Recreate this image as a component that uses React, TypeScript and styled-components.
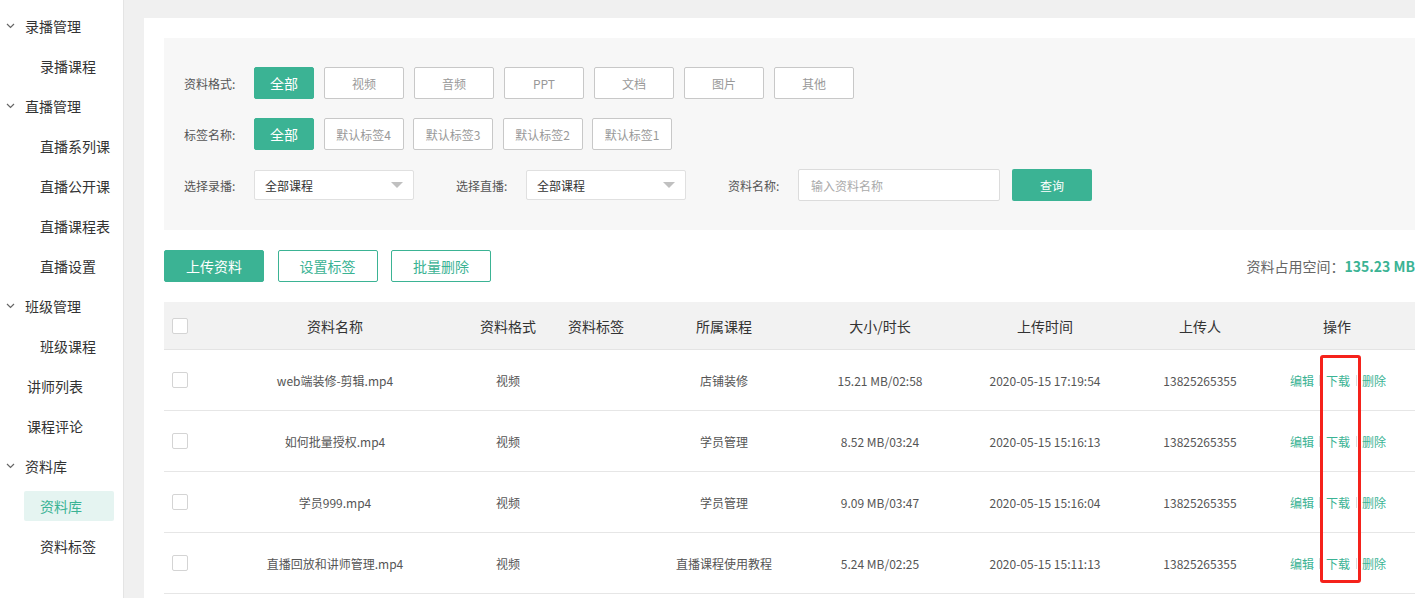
import styled, { createGlobalStyle } from 'styled-components';

const GREEN = '#3bb394';

const GlobalStyle = createGlobalStyle`
  html, body {
    margin: 0;
    padding: 0;
    background: #f0f0f0;
    overflow: hidden;
  }
  body {
    font-family: 'Noto Sans CJK SC', 'Noto Sans', sans-serif;
    font-size: 12px;
    color: #333;
  }
  * {
    box-sizing: border-box;
  }
`;

const menu = [
  { type: 'group', label: '录播管理' },
  { type: 'sub', label: '录播课程' },
  { type: 'group', label: '直播管理' },
  { type: 'sub', label: '直播系列课' },
  { type: 'sub', label: '直播公开课' },
  { type: 'sub', label: '直播课程表' },
  { type: 'sub', label: '直播设置' },
  { type: 'group', label: '班级管理' },
  { type: 'sub', label: '班级课程' },
  { type: 'single', label: '讲师列表' },
  { type: 'single', label: '课程评论' },
  { type: 'group', label: '资料库' },
  { type: 'sub', label: '资料库', active: true },
  { type: 'sub', label: '资料标签' },
];

const formats = ['视频', '音频', 'PPT', '文档', '图片', '其他'];
const tags = ['默认标签4', '默认标签3', '默认标签2', '默认标签1'];

const columns = ['资料名称', '资料格式', '资料标签', '所属课程', '大小/时长', '上传时间', '上传人', '操作'];

const rows = [
  { name: 'web端装修-剪辑.mp4', course: '店铺装修', size: '15.21 MB/02:58', time: '2020-05-15 17:19:54' },
  { name: '如何批量授权.mp4', course: '学员管理', size: '8.52 MB/03:24', time: '2020-05-15 15:16:13' },
  { name: '学员999.mp4', course: '学员管理', size: '9.09 MB/03:47', time: '2020-05-15 15:16:04' },
  { name: '直播回放和讲师管理.mp4', course: '直播课程使用教程', size: '5.24 MB/02:25', time: '2020-05-15 15:11:13' },
];

function Chevron() {
  return (
    <svg width="9" height="6" viewBox="0 0 9 6">
      <path d="M1 1 L4.5 4.5 L8 1" fill="none" stroke="#666" strokeWidth="1.2" />
    </svg>
  );
}

function Caret() {
  return (
    <svg width="12" height="7" viewBox="0 0 12 7">
      <path d="M0 0 L12 0 L6 6 Z" fill="#c0c0c0" />
    </svg>
  );
}

export default function App() {
  return (
    <S.Page>
      <GlobalStyle />
      <S.Sidebar>
        {menu.map((item, i) => (
          <S.MenuItem key={i} $type={item.type}>
            {item.type === 'group' && (
              <S.ChevronBox>
                <Chevron />
              </S.ChevronBox>
            )}
            <S.MenuLabel $type={item.type} $active={!!item.active}>
              {item.label}
            </S.MenuLabel>
          </S.MenuItem>
        ))}
      </S.Sidebar>

      <S.Content>
        <S.Card>
          <S.Filter>
            <S.FilterRow>
              <S.FilterLabel>资料格式:</S.FilterLabel>
              <S.Chips $gap={10}>
                <S.Chip $active>全部</S.Chip>
                {formats.map((f) => (
                  <S.Chip key={f}>{f}</S.Chip>
                ))}
              </S.Chips>
            </S.FilterRow>
            <S.FilterRow>
              <S.FilterLabel>标签名称:</S.FilterLabel>
              <S.Chips $gap={9.5}>
                <S.Chip $active>全部</S.Chip>
                {tags.map((t) => (
                  <S.Chip key={t}>{t}</S.Chip>
                ))}
              </S.Chips>
            </S.FilterRow>
            <S.FilterRow>
              <S.FilterLabel>选择录播:</S.FilterLabel>
              <S.Select>
                <span>全部课程</span>
                <Caret />
              </S.Select>
              <S.FilterLabel $spaced>选择直播:</S.FilterLabel>
              <S.Select>
                <span>全部课程</span>
                <Caret />
              </S.Select>
              <S.FilterLabel $spaced>资料名称:</S.FilterLabel>
              <S.Input placeholder="输入资料名称" />
              <S.QueryButton>查询</S.QueryButton>
            </S.FilterRow>
          </S.Filter>

          <S.Toolbar>
            <S.Actions>
              <S.ActionButton $primary>上传资料</S.ActionButton>
              <S.ActionButton>设置标签</S.ActionButton>
              <S.ActionButton>批量删除</S.ActionButton>
            </S.Actions>
            <S.Usage>
              资料占用空间：<strong>135.23 MB</strong>
            </S.Usage>
          </S.Toolbar>

          <S.Table>
            <S.HeadRow>
              <S.CheckCell>
                <S.Checkbox />
              </S.CheckCell>
              {columns.map((c) => (
                <S.Cell key={c}>{c}</S.Cell>
              ))}
            </S.HeadRow>
            {rows.map((r) => (
              <S.BodyRow key={r.name}>
                <S.CheckCell>
                  <S.Checkbox />
                </S.CheckCell>
                <S.Cell>{r.name}</S.Cell>
                <S.Cell>视频</S.Cell>
                <S.Cell />
                <S.Cell>{r.course}</S.Cell>
                <S.Cell>{r.size}</S.Cell>
                <S.Cell>{r.time}</S.Cell>
                <S.Cell>13825265355</S.Cell>
                <S.Cell>
                  <S.Ops>
                    <S.OpLink>编辑</S.OpLink>
                    <S.OpSep />
                    <S.OpLink>下载</S.OpLink>
                    <S.OpSep />
                    <S.OpLink>删除</S.OpLink>
                  </S.Ops>
                </S.Cell>
              </S.BodyRow>
            ))}
          </S.Table>
        </S.Card>
      </S.Content>

      <S.Highlight />
    </S.Page>
  );
}

const S = {
  Page: styled.div`
    position: relative;
    display: flex;
    width: 1415px;
    height: 598px;
    overflow: hidden;
  `,
  Sidebar: styled.div`
    width: 124px;
    flex-shrink: 0;
    background: #fff;
    border-right: 1px solid #e4e4e4;
    padding-top: 6px;
  `,
  MenuItem: styled.div<{ $type: string }>`
    position: relative;
    height: 40px;
    display: flex;
    align-items: center;
    padding-left: ${(p) => (p.$type === 'group' ? '25px' : p.$type === 'single' ? '27px' : '24px')};
  `,
  ChevronBox: styled.span`
    position: absolute;
    left: 6px;
    top: 17px;
    display: flex;
  `,
  MenuLabel: styled.span<{ $type: string; $active: boolean }>`
    font-size: 14px;
    line-height: 30px;
    color: ${(p) => (p.$active ? GREEN : '#333')};
    ${(p) =>
      p.$type === 'sub' &&
      `
      width: 90px;
      padding-left: 16px;
      border-radius: 2px;
    `}
    background: ${(p) => (p.$active ? '#e5f4f1' : 'transparent')};
  `,
  Content: styled.div`
    flex: 1;
    padding: 18px 0 0 20px;
    overflow: hidden;
  `,
  Card: styled.div`
    width: 1296px;
    min-height: 600px;
    background: #fff;
    padding: 20px;
  `,
  Filter: styled.div`
    background: #f7f7f7;
    padding: 29px 20px 29px;
    display: flex;
    flex-direction: column;
    gap: 19px;
  `,
  FilterRow: styled.div`
    display: flex;
    align-items: center;
    height: 32px;
  `,
  FilterLabel: styled.span<{ $spaced?: boolean }>`
    width: 70px;
    flex-shrink: 0;
    color: #555;
    font-size: 12px;
    margin-left: ${(p) => (p.$spaced ? '42px' : '0')};
  `,
  Chips: styled.div<{ $gap: number }>`
    display: flex;
    gap: ${(p) => p.$gap}px;
  `,
  Chip: styled.button<{ $active?: boolean }>`
    width: ${(p) => (p.$active ? '60px' : '80px')};
    height: 32px;
    border-radius: 2px;
    font-family: inherit;
    font-size: ${(p) => (p.$active ? '14px' : '12px')};
    border: 1px solid ${(p) => (p.$active ? GREEN : '#c8c8c8')};
    background: ${(p) => (p.$active ? GREEN : '#fff')};
    color: ${(p) => (p.$active ? '#fff' : '#999')};
    padding: 0;
  `,
  Select: styled.div`
    width: 160px;
    height: 30px;
    background: #fff;
    border: 1px solid #e0e0e0;
    border-radius: 2px;
    display: flex;
    align-items: center;
    justify-content: space-between;
    padding: 0 10px 0 10px;
    font-size: 12px;
    color: #333;
  `,
  Input: styled.input`
    width: 202px;
    height: 32px;
    border: 1px solid #dcdcdc;
    border-radius: 2px;
    background: #fff;
    padding: 0 12px;
    font-family: inherit;
    font-size: 12px;
    outline: none;
    &::placeholder {
      color: #aaa;
    }
  `,
  QueryButton: styled.button`
    width: 80px;
    height: 32px;
    margin-left: 12px;
    border: none;
    border-radius: 2px;
    background: ${GREEN};
    color: #fff;
    font-family: inherit;
    font-size: 12px;
  `,
  Toolbar: styled.div`
    display: flex;
    align-items: center;
    justify-content: space-between;
    margin: 20px 0;
  `,
  Actions: styled.div`
    display: flex;
    gap: 13.5px;
  `,
  ActionButton: styled.button<{ $primary?: boolean }>`
    width: 100px;
    height: 32px;
    border-radius: 2px;
    border: 1px solid ${GREEN};
    background: ${(p) => (p.$primary ? GREEN : '#fff')};
    color: ${(p) => (p.$primary ? '#fff' : GREEN)};
    font-family: inherit;
    font-size: 14px;
    padding: 0;
  `,
  Usage: styled.div`
    font-size: 14px;
    color: #666;
    white-space: nowrap;
    margin-right: 5px;
    strong {
      color: ${GREEN};
      font-weight: 700;
    }
  `,
  Table: styled.div`
    width: 1256px;
  `,
  HeadRow: styled.div`
    display: grid;
    grid-template-columns: 50px 242px 104px 72px 184px 128px 202px 108px 166px;
    height: 48px;
    align-items: center;
    background: #f2f2f2;
    border-bottom: 1px solid #e4e4e4;
    font-size: 14px;
    color: #333;
  `,
  BodyRow: styled.div`
    display: grid;
    grid-template-columns: 50px 242px 104px 72px 184px 128px 202px 108px 166px;
    height: 61px;
    align-items: center;
    border-bottom: 1px solid #e6e6e6;
    font-size: 12px;
    color: #555;
  `,
  CheckCell: styled.div`
    padding-left: 8px;
    display: flex;
  `,
  Checkbox: styled.span`
    width: 16px;
    height: 16px;
    border: 1px solid #d4d4d4;
    border-radius: 2px;
    background: #fff;
  `,
  Cell: styled.div`
    text-align: center;
    white-space: nowrap;
  `,
  Ops: styled.div`
    display: flex;
    align-items: center;
    justify-content: center;
    margin-left: 2px;
  `,
  OpLink: styled.span`
    color: ${GREEN};
    font-size: 12px;
  `,
  OpSep: styled.span`
    width: 1px;
    height: 11px;
    background: #ddd;
    margin: 0 5.5px;
  `,
  Highlight: styled.div`
    position: absolute;
    left: 1320px;
    top: 355px;
    width: 41px;
    height: 228px;
    border: 3px solid #f5221b;
    border-radius: 3px;
    pointer-events: none;
  `,
};
